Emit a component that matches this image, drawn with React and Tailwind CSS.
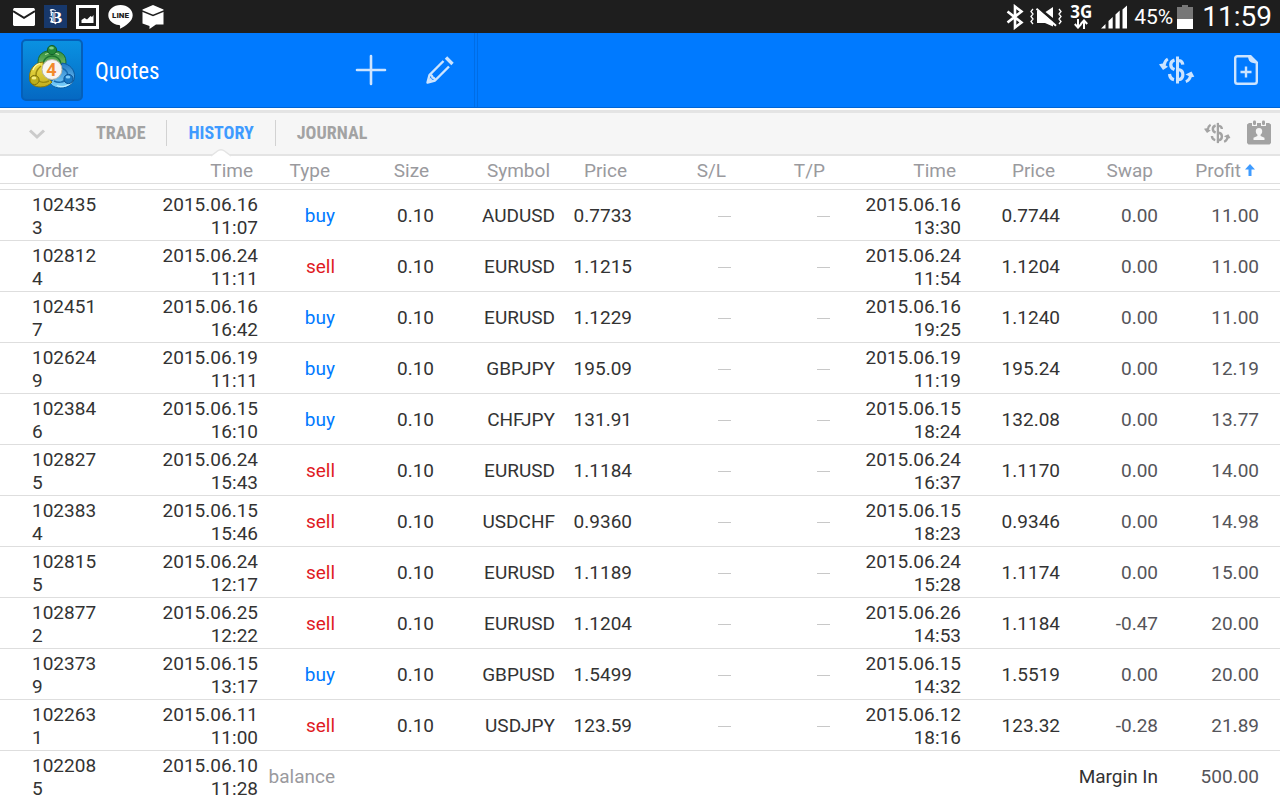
import React, { useState } from "react";

const trades = [
  { order: "1024353", openTime: "2015.06.16 11:07", type: "buy", size: "0.10", symbol: "AUDUSD", openPrice: "0.7733", closeTime: "2015.06.16 13:30", closePrice: "0.7744", swap: "0.00", profit: "11.00" },
  { order: "1028124", openTime: "2015.06.24 11:11", type: "sell", size: "0.10", symbol: "EURUSD", openPrice: "1.1215", closeTime: "2015.06.24 11:54", closePrice: "1.1204", swap: "0.00", profit: "11.00" },
  { order: "1024517", openTime: "2015.06.16 16:42", type: "buy", size: "0.10", symbol: "EURUSD", openPrice: "1.1229", closeTime: "2015.06.16 19:25", closePrice: "1.1240", swap: "0.00", profit: "11.00" },
  { order: "1026249", openTime: "2015.06.19 11:11", type: "buy", size: "0.10", symbol: "GBPJPY", openPrice: "195.09", closeTime: "2015.06.19 11:19", closePrice: "195.24", swap: "0.00", profit: "12.19" },
  { order: "1023846", openTime: "2015.06.15 16:10", type: "buy", size: "0.10", symbol: "CHFJPY", openPrice: "131.91", closeTime: "2015.06.15 18:24", closePrice: "132.08", swap: "0.00", profit: "13.77" },
  { order: "1028275", openTime: "2015.06.24 15:43", type: "sell", size: "0.10", symbol: "EURUSD", openPrice: "1.1184", closeTime: "2015.06.24 16:37", closePrice: "1.1170", swap: "0.00", profit: "14.00" },
  { order: "1023834", openTime: "2015.06.15 15:46", type: "sell", size: "0.10", symbol: "USDCHF", openPrice: "0.9360", closeTime: "2015.06.15 18:23", closePrice: "0.9346", swap: "0.00", profit: "14.98" },
  { order: "1028155", openTime: "2015.06.24 12:17", type: "sell", size: "0.10", symbol: "EURUSD", openPrice: "1.1189", closeTime: "2015.06.24 15:28", closePrice: "1.1174", swap: "0.00", profit: "15.00" },
  { order: "1028772", openTime: "2015.06.25 12:22", type: "sell", size: "0.10", symbol: "EURUSD", openPrice: "1.1204", closeTime: "2015.06.26 14:53", closePrice: "1.1184", swap: "-0.47", profit: "20.00" },
  { order: "1023739", openTime: "2015.06.15 13:17", type: "buy", size: "0.10", symbol: "GBPUSD", openPrice: "1.5499", closeTime: "2015.06.15 14:32", closePrice: "1.5519", swap: "0.00", profit: "20.00" },
  { order: "1022631", openTime: "2015.06.11 11:00", type: "sell", size: "0.10", symbol: "USDJPY", openPrice: "123.59", closeTime: "2015.06.12 18:16", closePrice: "123.32", swap: "-0.28", profit: "21.89" },
];

const columns = [
  { label: "Order", width: "w-[102px]" },
  { label: "Time", width: "w-[156px]" },
  { label: "Type", width: "w-[77px]" },
  { label: "Size", width: "w-[99px]" },
  { label: "Symbol", width: "w-[121px]" },
  { label: "Price", width: "w-[77px]" },
  { label: "S/L", width: "w-[99px]" },
  { label: "T/P", width: "w-[99px]" },
  { label: "Time", width: "w-[131px]" },
  { label: "Price", width: "w-[99px]" },
  { label: "Swap", width: "w-[98px]" },
  { label: "Profit", width: "w-[122px]" },
];

const tabs = ["TRADE", "HISTORY", "JOURNAL"];

const DollarArrows = ({ className }) => (
  <svg viewBox="0 0 36 28" className={className} fill="none" stroke="currentColor" strokeWidth="3.2" aria-hidden="true">
    <path d="M18.500 0.500v27" strokeWidth="3" />
    <path d="M15.500 4c-5 1.600-5 7.600 0 9.600" />
    <path d="M20 4.500c2.400.3 3.600 1.600 3.800 4.200" />
    <path d="M19.500 13.600c5.800.8 5.800 9.400 0 10" />
    <path d="M10.500 18c.3 3.200 1.700 5 4.500 5.600" />
    <path d="M8.800 3C7 4 5.500 6 5 9.500" strokeWidth="3" />
    <path d="M0 8.200l3.500-.6 5.500 3.200-5 3.200z" fill="currentColor" stroke="none" />
    <path d="M26.800 25.600c2.800-1 4.400-3.200 4.800-6.800" strokeWidth="3" />
    <path d="M26.500 18.400l6-2.900 2.800 5.200-3 .6z" fill="currentColor" stroke="none" />
  </svg>
);

const StatusBar = () => (
  <div className="flex h-[33px] shrink-0 items-center justify-between bg-[#1e1e1e] pl-[13px] pr-2 text-white">
    <div className="flex items-center gap-[9px]">
      <svg width="22" height="18" viewBox="0 0 22 18" aria-label="Mail">
        <path d="M1 0h20l1 1.500v15.500l-1 1H1l-1-1V1.500z" fill="#fff" />
        <path d="M0 3.200l11 6.600 11-6.600" fill="none" stroke="#1e1e1e" strokeWidth="2" />
      </svg>
      <svg width="23" height="23" viewBox="0 0 23 23" aria-label="News">
        <rect width="23" height="23" fill="#17386b" />
        <text x="12.500" y="17.500" textAnchor="middle" fontFamily="Liberation Serif, serif" fontWeight="700" fontSize="17" fill="#fff">B</text>
        <path d="M6 5.500c2-2 4-.5 5.500.5M7.500 5.500c-1.500 2.500 1 3-.5 5.500M5.500 13c3-1 2.500 1.500 1.500 3.500 2-.5 3 .5 4.500 2 1-1.500 2.500-1.500 4-1.500" stroke="#fff" strokeWidth="1.200" fill="none" />
        <path d="M10 5v12" stroke="#17386b" strokeWidth=".8" />
      </svg>
      <svg width="23" height="24" viewBox="0 0 23 24" aria-label="Screenshot">
        <rect x="1.500" y="1.500" width="20" height="21" fill="#1e1e1e" stroke="#fff" strokeWidth="3" />
        <path d="M5.500 18v-3l3-2 2.500 1.500 3.500-3.500 1.500 1 1.500-2v8z" fill="#fff" />
      </svg>
      <svg width="25" height="24" viewBox="0 0 25 24" aria-label="LINE">
        <path d="M12.500 0C5.600 0 .3 4.500.3 10.200c0 5.200 4.700 9 10.600 9.900 1.600.4 1.400 1 1 3.600 5.400-2.700 12.800-7.200 12.800-13.500C24.700 4.500 19.400 0 12.500 0z" fill="#fff" />
        <text x="12.500" y="13" textAnchor="middle" fontFamily="Roboto, sans-serif" fontWeight="900" fontSize="8" fill="#1e1e1e">LINE</text>
      </svg>
      <svg width="22" height="24" viewBox="0 0 22 24" aria-label="Package">
        <path d="M11 0l10.500 4.500v15H14L7.500 24v-3L.5 18.500v-14z" fill="#fff" />
        <path d="M0 6l11 4.500L22 6" fill="none" stroke="#1e1e1e" strokeWidth="1.600" />
      </svg>
    </div>

    <div className="flex items-center font-[Roboto,sans-serif]">
      <svg width="18" height="26" viewBox="0 0 18 26" className="mr-[6px]" fill="none" stroke="#fff" strokeWidth="2.600" aria-label="Bluetooth">
        <path d="M1.500 7.500l14 11L9 23.500V2.500l6.500 5-14 11" />
      </svg>
      <svg width="32" height="20" viewBox="0 0 32 20" className="mr-[7px]" fill="none" stroke="#fff" aria-label="Vibrate">
        <path d="M3 2L1 4.500l2 2.500-2 2.500L3 12l-2 2.500L3 17M29 2l2 2.500L29 7l2 2.500-2 2.500 2 2.500-2 2.500" strokeWidth="1.300" />
        <path d="M7 4v12h8l8 3.500v-5L10 4z" fill="#fff" stroke="none" />
        <path d="M15.500 5L23 0v11z" fill="#fff" stroke="none" />
        <path d="M8 .8l19 16.500" stroke="#1e1e1e" strokeWidth="1.800" />
        <path d="M6.500 1.800l19.500 17" strokeWidth="2" />
      </svg>
      <div className="mr-2 flex w-6 flex-col items-center">
        <span className="font-['Noto_Sans',sans-serif] text-[17px] font-bold leading-[15px]">3G</span>
        <svg width="14" height="10" viewBox="0 0 14 10" fill="none" stroke="#fff" strokeWidth="2" aria-hidden="true">
          <path d="M4 0v8M.8 5L4 8.600 7.200 5M10 10V2M6.800 5L10 1.400 13.200 5" />
        </svg>
      </div>
      <svg width="26" height="24" viewBox="0 0 26 24" className="mr-[7px]" fill="#fff" aria-label="Signal">
        <path d="M0 23.500l4.500-4.500v4.500zM7.500 23.500v-7.500l4.200-4v11.500zM14.500 23.500V9.500l4.200-4v18zM21.500 23.500V4.500L26 .5v23z" />
      </svg>
      <span className="mr-1 text-[21px] leading-6">45%</span>
      <svg width="16" height="24" viewBox="0 0 16 24" className="mr-[9px]" aria-label="Battery">
        <path d="M0 2h5V0h6v2h5v22H0z" fill="#777" />
        <path d="M0 14h16v10H0z" fill="#fff" />
      </svg>
      <span className="text-[28px] leading-8">11:59</span>
    </div>
  </div>
);

const AppLogo = () => (
  <svg width="62" height="62" viewBox="0 0 62 62" aria-hidden="true">
    <defs>
      <linearGradient id="tile" x1="0" y1="0" x2="0" y2="1">
        <stop offset="0" stopColor="#0a92e2" />
        <stop offset="1" stopColor="#0568c2" />
      </linearGradient>
      <linearGradient id="green" x1="0" y1="0" x2="0" y2="1">
        <stop offset="0" stopColor="#2f8f3e" />
        <stop offset="1" stopColor="#8fca74" />
      </linearGradient>
      <linearGradient id="yellow" x1="0" y1="0" x2="0" y2="1">
        <stop offset="0" stopColor="#f0e04c" />
        <stop offset="1" stopColor="#c2ae1c" />
      </linearGradient>
      <linearGradient id="blue" x1="0" y1="0" x2="0" y2="1">
        <stop offset="0" stopColor="#2379c4" />
        <stop offset="1" stopColor="#7fd4ff" />
      </linearGradient>
    </defs>
    <rect x="1" y="1" width="60" height="60" rx="4" fill="url(#tile)" stroke="#055fb9" strokeWidth="2" />
    <path d="M17.500 27C15 15 23 11.500 31 11.500S47 15 44.500 27L38 32 22 28z" fill="url(#green)" stroke="#1a6a2a" />
    <path d="M22 26c0-12 18-12 18 0" fill="none" stroke="#1d7532" strokeWidth="1.500" />
    <path d="M24 15.500c4-2 10-2 14 0" fill="none" stroke="#b4e0a0" strokeWidth="1.200" />
    <path d="M41 24c8 1 13 7 12.500 14-.5 7-7 11-14 11-5 0-9-2-11-6l8-5z" fill="url(#blue)" stroke="#0c5a9f" />
    <path d="M41 29c5 2 7 6 5 10-3 5-9 5-13 3" fill="none" stroke="#176bb0" strokeWidth="1.500" />
    <path d="M51 43c-4 5-11 5.500-15 3.500" fill="none" stroke="#c2efff" strokeWidth="1.200" />
    <path d="M22 23C13 24 8 31 8.500 39c.5 6 5 9 11 9 5 0 9-2 11.500-5L23 36z" fill="url(#yellow)" stroke="#85770d" />
    <path d="M20 27c-5 4-6 9-4 13 3 4 8 4 12 2" fill="none" stroke="#9a8a10" strokeWidth="1.500" />
    <path d="M12 31c1-3 4-6 7-6.500" fill="none" stroke="#fffbb0" strokeWidth="1.200" />
    <circle cx="31" cy="11" r="4.600" fill="#23883a" stroke="#14602a" />
    <circle cx="13.500" cy="41" r="4.600" fill="#bcae1c" stroke="#7c700d" />
    <circle cx="47.500" cy="40" r="4.600" fill="#1878c4" stroke="#0b4f91" />
    <ellipse cx="30.500" cy="9" rx="2.400" ry="1.500" fill="#7fce86" />
    <ellipse cx="13" cy="39" rx="2.400" ry="1.500" fill="#f6ec80" />
    <ellipse cx="47" cy="38" rx="2.400" ry="1.500" fill="#7fcbfb" />
    <circle cx="31" cy="30.500" r="10" fill="#f7f5f2" stroke="#b9b9a8" strokeWidth="1" />
    <text x="30.500" y="37" textAnchor="middle" fontFamily="Roboto, sans-serif" fontWeight="700" fontSize="18" fill="#f28a2c">4</text>
  </svg>
);

const Header = () => (
  <header className="flex h-[75px] shrink-0 border-b border-[#0065d6] bg-[#007aff] text-[#cce4ff]">
    <div className="flex w-[475px] items-center border-r border-[#006de6] pl-[21px] pr-[19px]">
      <AppLogo />
      <h1 className="ml-3 flex-1 pt-1 font-['Roboto_Condensed','Liberation_Sans_Narrow',Roboto,sans-serif] text-[23px] leading-8 text-white">Quotes</h1>
      <button type="button" aria-label="Add symbol" className="mr-[38px]">
        <svg width="32" height="32" viewBox="0 0 32 32" stroke="currentColor" strokeWidth="2.600" strokeLinecap="round" className="block">
          <path d="M16 2v28M2 16h28" />
        </svg>
      </button>
      <button type="button" aria-label="Edit symbols">
        <svg width="30" height="30" viewBox="0 0 30 30" fill="none" stroke="currentColor" strokeWidth="2.400" className="block">
          <path d="M18.500 6L4.500 20 2.500 27.500 10 25.500 24 11.500" strokeLinejoin="round" />
          <path d="M4.500 20c2.500 0 2.500.5 3 2.500 2 .5 2.500.5 2.500 3" />
          <path d="M5 22.500L2.500 27.500l5-2.500z" fill="currentColor" stroke="none" />
          <path d="M21 2.500l6.500 6.500" strokeWidth="3.400" />
        </svg>
      </button>
    </div>
    <div className="ml-[2px] flex flex-1 items-center justify-end gap-[38px] border-l border-[#006de6] pr-[21px]">
      <button type="button" aria-label="New order">
        <DollarArrows className="block h-7 w-9" />
      </button>
      <button type="button" aria-label="New document">
        <svg width="26" height="32" viewBox="0 0 26 32" fill="none" stroke="currentColor" strokeWidth="2.400" className="block">
          <path d="M16 2.200H4.500Q2.200 2.200 2.200 4.500v23Q2.200 29.800 4.500 29.800h17q2.300 0 2.300-2.300V10" />
          <path d="M15 1h3l7 7v4c-.5-2-2-2.500-4.500-3C16.500 8.500 15 6 15 1z" fill="currentColor" stroke="none" />
          <path d="M13 12.500v11M7.500 18h11" strokeWidth="2.400" />
        </svg>
      </button>
    </div>
  </header>
);

const TabBar = ({ active, onChange }) => (
  <nav className="mt-[2px] flex h-[46px] shrink-0 items-center border-b-2 border-t-[3px] border-[#e4e4e4] bg-[#f6f6f6] pl-7 pr-[9px] text-[#a3a3a3]">
    <button type="button" aria-label="Collapse" className="mr-[29px]">
      <svg width="18" height="12" viewBox="0 0 18 12" fill="none" stroke="#cbcbcb" strokeWidth="3" className="block">
        <path d="M2 2.500l7 6.500 7-6.500" />
      </svg>
    </button>
    <div className="flex h-full flex-1 items-center divide-x divide-[#d2d2d2] pb-[2px]">
      {tabs.map((tab) => (
        <div key={tab} className="relative h-[26px] px-[21px]">
          <button
            type="button"
            onClick={() => onChange(tab)}
            className={`block font-['Roboto_Condensed','Liberation_Sans_Narrow',Roboto,sans-serif] text-[18px] font-bold leading-[26px] ${
              active === tab ? "text-[#3f9bff]" : ""
            }`}
          >
            {tab}
          </button>
          {active === tab && (
            <svg width="20" height="8" viewBox="0 0 20 8" className="absolute -bottom-[11px] left-1/2 -translate-x-1/2" aria-hidden="true">
              <path d="M0 7L6.500 2Q10-.5 13.500 2L20 7v1H0z" fill="#fff" />
              <path d="M0 7L6.500 2Q10-.5 13.500 2L20 7" fill="none" stroke="#e4e4e4" strokeWidth="1.500" />
            </svg>
          )}
        </div>
      ))}
    </div>
    <div className="flex items-center gap-4 pb-[2px]">
      <button type="button" aria-label="Filter by symbol">
        <DollarArrows className="block h-[22px] w-[27px]" />
      </button>
      <button type="button" aria-label="Select period">
        <svg width="24" height="25" viewBox="0 0 24 25" fill="currentColor" className="block">
          <path d="M2 3h20l2 1.500V23l-1.500 1.500h-21L0 23V4.500z" />
          <path d="M5 0h5v6H5zM14 0h5v6h-5z" fill="#f6f6f6" />
          <rect x="6" y="0.500" width="3" height="4.500" rx="1.200" />
          <rect x="15" y="0.500" width="3" height="4.500" rx="1.200" />
          <path d="M12 8c2.300 0 3.400 1.500 3.200 3.600-.1 1.500-.7 2.500-1.600 3.200v1.200l3.900 1.800V20h-11v-2.200l3.900-1.800v-1.200c-.9-.7-1.500-1.700-1.600-3.200C8.600 9.500 9.700 8 12 8z" fill="#f6f6f6" />
        </svg>
      </button>
    </div>
  </nav>
);

const cell = "border-b border-[#dedede] p-0";

const HistoryTable = () => (
  <table className="w-full table-fixed border-separate border-spacing-0 text-right text-[19px] leading-[23px] text-[#333]">
    <thead className="text-[#9a9a9e]">
      <tr>
        {columns.map((col, idx) => (
          <th
            key={idx}
            scope="col"
            className={`${col.width} border-b border-[#dedede] pb-px pt-[3px] font-normal ${
              idx === 0 ? "pl-8 text-left" : col.label === "Profit" ? "pr-[25px]" : "pr-[5px]"
            }`}
          >
            {col.label}
            {col.label === "Profit" && (
              <svg width="10" height="12" viewBox="0 0 10 12" className="mb-1 ml-1 inline-block" fill="#3f9bff" aria-label="ascending">
                <path d="M5 0l5 5.500H6.500V12h-3V5.500H0z" />
              </svg>
            )}
          </th>
        ))}
      </tr>
    </thead>
    <tbody>
      <tr aria-hidden="true">
        <td colSpan={12} className={`${cell} h-[6px]`} />
      </tr>
      {trades.map((t) => (
        <tr key={t.order}>
          <td className={`${cell} break-all pb-px pl-8 pt-[3px] text-left`}>{t.order}</td>
          <td className={`${cell} pb-px pl-14 pt-[3px]`}>{t.openTime}</td>
          <td className={`${cell} ${t.type === "buy" ? "text-[#007aff]" : "text-[#e01a1f]"}`}>{t.type}</td>
          <td className={cell}>{t.size}</td>
          <td className={cell}>{t.symbol}</td>
          <td className={cell}>{t.openPrice}</td>
          <td className={`${cell} text-[#c8c8c8]`}>
            <span className="inline-block h-px w-[13px] bg-current align-middle" />
          </td>
          <td className={`${cell} text-[#c8c8c8]`}>
            <span className="inline-block h-px w-[13px] bg-current align-middle" />
          </td>
          <td className={`${cell} pb-px pl-7 pt-[3px]`}>{t.closeTime}</td>
          <td className={cell}>{t.closePrice}</td>
          <td className={`${cell} text-[#55555a]`}>{t.swap}</td>
          <td className={`${cell} pr-[21px] text-[#55555a]`}>{t.profit}</td>
        </tr>
      ))}
      <tr>
        <td className={`${cell} break-all pb-px pl-8 pt-[3px] text-left`}>1022085</td>
        <td className={`${cell} pb-px pl-14 pt-[3px]`}>2015.06.10 11:28</td>
        <td className={`${cell} text-[#9a9a9e]`}>balance</td>
        <td colSpan={6} className={cell} />
        <td colSpan={2} className={cell}>Margin In</td>
        <td className={`${cell} pr-[21px] text-[#55555a]`}>500.00</td>
      </tr>
    </tbody>
  </table>
);

const App = () => {
  const [activeTab, setActiveTab] = useState("HISTORY");

  return (
    <div className="flex h-screen flex-col overflow-hidden bg-white font-[Roboto,sans-serif]">
      <StatusBar />
      <Header />
      <TabBar active={activeTab} onChange={setActiveTab} />
      <main className="min-h-0 flex-1 overflow-y-auto [scrollbar-width:none]">
        <HistoryTable />
      </main>
    </div>
  );
};

export default App;
